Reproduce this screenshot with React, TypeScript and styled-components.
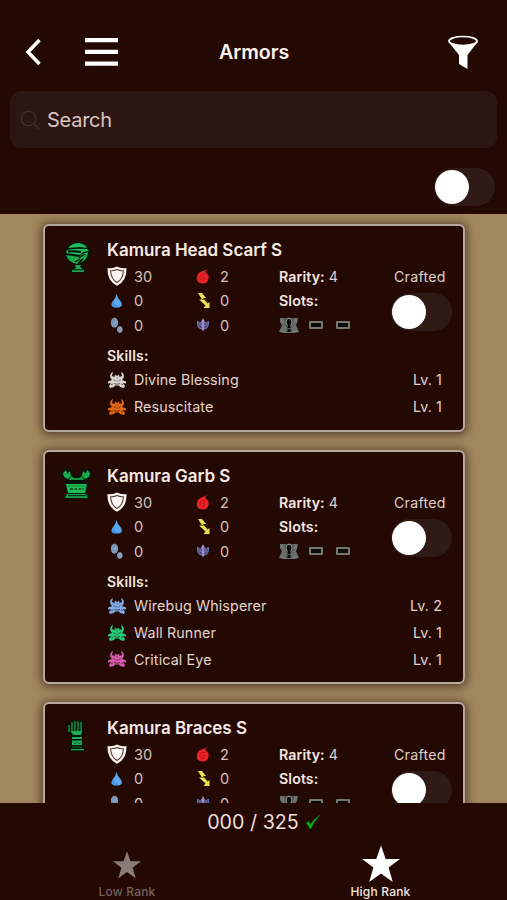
import React from "react";
import styled, { createGlobalStyle } from "styled-components";

const GlobalStyle = createGlobalStyle`
  * { box-sizing: border-box; }
  body { margin: 0; background: #230902; }
`;

const Screen = styled.div`
  width: 507px;
  height: 900px;
  display: flex;
  flex-direction: column;
  overflow: hidden;
  background: #230902;
  color: #f3e4e0;
  font-family: Inter, "Liberation Sans", sans-serif;
`;

const Header = styled.header`
  flex: 0 0 214px;
  padding: 24px 10px 0;
`;

const NavBar = styled.nav`
  height: 56px;
  display: grid;
  grid-template-columns: 61px 123px 1fr 55px;
  align-items: center;
  padding-left: 8px;
`;

const IconButton = styled.button`
  display: flex;
  padding: 0 6px;
  border: 0;
  background: none;
  color: #fff;
`;

const Title = styled.h1`
  margin: 0;
  padding-left: 17px;
  font-size: 19.6px;
  line-height: 24px;
  font-weight: 600;
  color: #fff2ef;
`;

const SearchBox = styled.div`
  height: 57px;
  margin-top: 11px;
  padding-left: 10px;
  display: flex;
  align-items: center;
  gap: 7px;
  border-radius: 11px;
  background: #2d1611;
  font-size: 20px;
  line-height: 26px;
  letter-spacing: -0.25px;
  color: #d8c6c2;
`;

const FilterRow = styled.div`
  display: flex;
  justify-content: flex-end;
  padding: 20px 2px 0 0;
`;

const Track = styled.div`
  width: 61px;
  height: 38px;
  padding: 2px 0 0 1px;
  border-radius: 19px;
  background: #301a16;
`;

const Knob = styled.div`
  width: 34px;
  height: 34px;
  border-radius: 50%;
  background: #fff;
`;

const List = styled.main`
  flex: 0 0 589px;
  overflow: hidden;
  display: flex;
  flex-direction: column;
  gap: 18px;
  padding: 10px 42px 0 43px;
  background: #a1865e;
`;

const Card = styled.article<{ $height: number }>`
  flex: 0 0 ${(p) => p.$height}px;
  display: grid;
  grid-template-columns: 62px 1fr;
  border: 2px solid #b7a79f;
  border-radius: 6px;
  background: #230902;
  box-shadow: 0 1px 9px 2px rgba(40, 22, 8, 0.6);
`;

const Emblem = styled.div`
  padding: 15px 0 0 17px;
`;

const Body = styled.div`
  padding-top: 12px;
`;

const Name = styled.h2`
  margin: 0;
  height: 26px;
  font-size: 17px;
  line-height: 24px;
  font-weight: 600;
  letter-spacing: -0.02px;
  white-space: nowrap;
  color: #f9e9e5;
`;

const Details = styled.div`
  height: 79px;
  display: grid;
  grid-template-columns: 86px 86px 108px 66px;
`;

const Stack = styled.div`
  display: grid;
  grid-template-rows: repeat(3, 24.5px);
`;

const Stat = styled.div`
  display: grid;
  grid-template-columns: 20px 1fr;
  gap: 7px;
  align-items: center;
  font-size: 14.5px;
  color: #d6c1bb;
`;

const StatRight = styled(Stat)`
  grid-template-columns: 16px 1fr;
  gap: 8px;
  padding-left: 3px;
`;

const Fact = styled.div`
  display: flex;
  align-items: center;
  gap: 4px;
  font-size: 14.2px;
  letter-spacing: 0.1px;
  color: #dfcfca;
`;

const Strong = styled.span`
  font-weight: 600;
  color: #f5e6e1;
`;

const SlotRow = styled(Fact)`
  gap: 13px;
`;

const JewelSlot = styled.span`
  display: flex;
  margin-right: -3px;
`;

const EmptySlot = styled.span`
  width: 14px;
  height: 8px;
  border: 2px solid #737671;
  border-radius: 1px;
  background: #090c0a;
`;

const Crafted = styled.div`
  padding: 1px 0 0 7px;
  font-size: 14.2px;
  line-height: 24px;
  letter-spacing: 0.25px;
  color: #dfcfca;
`;

const CraftedToggle = styled.div`
  padding: 4px 0 0 4px;
`;

const SkillsTitle = styled.h3`
  margin: 0;
  height: 24px;
  font-size: 14px;
  line-height: 25px;
  font-weight: 600;
  letter-spacing: 0.2px;
  color: #f5e6e1;
`;

const Skill = styled.div`
  height: 26.8px;
  display: grid;
  grid-template-columns: 20px 1fr auto;
  column-gap: 7px;
  align-items: center;
  padding: 0 21px 1px 0;
  font-size: 14.3px;
  letter-spacing: 0.12px;
  color: #e3d3cd;
`;

const Footer = styled.footer`
  flex: 1;
`;

const Progress = styled.div`
  height: 38px;
  display: flex;
  justify-content: center;
  align-items: center;
  gap: 7px;
  padding-left: 20px;
  font-size: 19.7px;
  color: #eedfda;
`;

const Tabs = styled.div`
  display: grid;
  grid-template-columns: 254px 253px;
`;

const Tab = styled.div<{ $active?: boolean }>`
  height: 59px;
  display: flex;
  flex-direction: column;
  align-items: center;
  justify-content: flex-end;
  gap: ${(p) => (p.$active ? 1 : 5)}px;
  padding-bottom: 1px;
  font-size: 12px;
  line-height: 15px;
  font-weight: 500;
  letter-spacing: 0.2px;
  color: ${(p) => (p.$active ? "#f5e6e1" : "#75625e")};

  svg {
    color: ${(p) => (p.$active ? "#fff" : "#8b7b78")};
  }
`;

function Toggle() {
  return (
    <Track>
      <Knob />
    </Track>
  );
}

function Scarf() {
  return (
    <svg width="30" height="33" viewBox="0 0 30 33">
      <path d="M3 10Q6 2 15 1Q25 1 28 9Q29 20 21 22L20 25L24 29V32H8V29L13 25L12 22Q4 20 3 13Z" fill="#02140a" />
      <path d="M6 7Q10 2 17 2Q23 3 25 7L18 6Z" fill="#20bd55" />
      <path d="M5 9Q14 7 25 8L27 10L21 11L18 14L4 12Z" fill="#20bd55" />
      <path d="M6 10.5Q13 10 19 11" fill="none" stroke="#02140a" strokeWidth="2" />
      <path d="M4 14L17 16L20 13L26 11Q26 18 19 22L22 17L18 19L15 23Q6 21 4 14Z" fill="#18a94b" />
      <path d="M17 17L23 13M13 21L18 18" stroke="#02140a" strokeWidth="1.2" />
      <path d="M13 24H19L18 26L22 29V31H10V29L14 27Z" fill="#20a44f" />
      <path d="M11 28.8H21" stroke="#02140a" />
    </svg>
  );
}

function Garb() {
  return (
    <svg width="30" height="33" viewBox="0 0 30 33">
      <path d="M0 4Q4 0 9 3L11 9H18L20 4Q24 0 29 3V10L24 13V16H26L24 26L27 28V32H2V28L5 26L3 16H6V13L0 10Z" fill="#02140a" />
      <path d="M1 6L4 3L5 7L8 4L9 9L6 12L2 10ZM28 6L25 3L24 7L21 4L20 9L23 12L27 10Z" fill="#18ad4b" />
      <path d="M9 9L12 11H17L20 9L22 13H7Z" fill="#139344" />
      <path d="M4 17H25L23 26H6Z" fill="#20bd55" />
      <path d="M6 19H24" stroke="#108337" />
      <path d="M8 22H11M12.5 22H15M16.5 22H19M20.5 22H22" stroke="#033916" strokeWidth="1.7" />
      <path d="M5 27H24L26 31H3Z" fill="#19a54a" />
      <path d="M6 28.7H24" stroke="#02140a" />
    </svg>
  );
}

function Brace() {
  return (
    <svg width="30" height="33" viewBox="0 0 30 33">
      <path d="M5 6L8 3L12 1H20L22 4V16L20 18L21 30L23 32H8V29L10 28V17L6 14Z" fill="#02140a" />
      <path d="M10 3V14M13 2V14M16 2V14M19 3V14M7 6V13" stroke="#10743a" strokeWidth="1.9" />
      <path d="M9 12H20L19 16H11ZM10 18H20V20H10ZM10 21.5H20V26H10ZM9 30H22V31.2H9Z" fill="#20ad51" />
      <path d="M11 23L13 25L15 23L17 25L19 23M10 28H20" fill="none" stroke="#076c31" />
    </svg>
  );
}

function Shield() {
  return (
    <svg width="20" height="20" viewBox="0 0 20 20">
      <path d="M10 .5Q14 3 19.5 2Q20 15 10 19.7Q0 15 .5 2Q6 3 10 .5Z" fill="#fff4f0" />
      <path d="M10 3.6Q13 5 16.4 4.7Q16 13 10 16.5Q4 13 3.6 4.7Q7 5 10 3.6Z" fill="#fff8f5" stroke="#573f39" strokeWidth="1.1" />
    </svg>
  );
}

function Flame() {
  return (
    <svg width="14" height="16" viewBox="0 0 14 16">
      <path d="M12 .5Q8.5 3 10 5Q13 6 12.7 10Q12 15.5 6.5 15.5Q0 15 .8 9Q2 4 7 3Q9 2 12 .5Z" fill="#eb2226" />
      <path d="M9.5 6.5Q4 6 4 9.5Q4.5 13 8 12Q9.5 11 8.5 9.2H6.5" fill="none" stroke="#a91419" strokeWidth=".8" />
    </svg>
  );
}

function Drop() {
  return (
    <svg width="20" height="14" viewBox="0 0 20 14">
      <path d="M9.5 0Q10.3 4 13.5 7Q17 12 12 13.6H7.5Q2 12 6 7Q9 3.5 9.5 0Z" fill="#5ca7f2" />
      <path d="M6 8Q4 12 8 12.7H12L9 11Q7 10 7.5 7Z" fill="#4494ec" />
    </svg>
  );
}

function Bolt() {
  return (
    <svg width="16" height="17" viewBox="0 0 16 17">
      <path d="M2 1H6L10 6H7L11.5 11.5L13.5 10V16H7.5L9.5 13.5L3 7.5H6Z" fill="#e9e24e" />
      <path d="M6 7.5H9L12 11" fill="none" stroke="#544212" strokeWidth=".7" />
    </svg>
  );
}

function Ice() {
  return (
    <svg width="20" height="17" viewBox="0 0 20 17" fill="#7796bb" stroke="#a4b5ce" strokeWidth=".7">
      <ellipse cx="7.5" cy="5.7" rx="3.1" ry="4.5" />
      <ellipse cx="12.8" cy="12.5" rx="2.4" ry="2.9" />
      <path d="M6 5L8 7L9 4M12 12L14 13" fill="none" />
    </svg>
  );
}

function Dragon() {
  return (
    <svg width="14" height="16" viewBox="0 0 14 16">
      <path d="M2 4Q1 9 4 11L7 12L10 11Q13 9 12 4M4 5V8L7 10L10 8V5" fill="none" stroke="#6970b1" strokeWidth="1.7" />
      <path d="M7 1L8.8 4.5L8 12L7 15L6 12L5.2 4.5Z" fill="#9a8fc4" />
    </svg>
  );
}

function Jewel() {
  return (
    <svg width="20" height="17" viewBox="0 0 20 17">
      <path d="M1 1H19L18 6L17 8L20 15L15 16H5L0 15L3 8L1 5Z" fill="#676d69" />
      <path d="M5 2Q10 -1 15 2L14 7L12 10L13 15H7L8 10L6 7Z" fill="#4c504e" />
      <ellipse cx="10" cy="5" rx="3" ry="3.7" fill="#080b0a" stroke="#a0a7a1" strokeWidth=".9" />
      <path d="M10 6V11" stroke="#060907" strokeWidth="2.5" />
      <circle cx="10" cy="13.5" r="1.5" fill="#060907" />
      <path d="M2 3L5 5M18 3L15 5M2 14L6 15M18 14L14 15" stroke="#858d87" strokeWidth=".8" />
    </svg>
  );
}

function SkillIcon({ color }: { color: string }) {
  return (
    <svg width="20" height="18" viewBox="0 0 20 18">
      <path d="M6 .8Q2 3 3.5 7L5 9L1 10.5V12.5L4 12L2 15L3 17L7 16L8 14.5H12L13 16L17 17L18 15L16 12L19 12.5V10.5L15 9L16.5 7Q18 3 14 .8L15 5L12.5 6L12 3.5L10 5L8 3.5L7.5 6L5 5Z" fill={color} />
      <path d="M6.5 8.5L8.5 10M13.5 8.5L11.5 10M7 12.5Q10 14 13 12.5M4 13.5L6 13M16 13.5L14 13" fill="none" stroke="#230902" strokeWidth=".9" opacity=".65" />
      <path d="M9 7H11M10 9V11" stroke="#230902" strokeWidth=".7" opacity=".45" />
    </svg>
  );
}

function Star({ size }: { size: number }) {
  return (
    <svg width={size} height={size} viewBox="0 0 38 38" fill="currentColor">
      <path d="M19 .5L23.7 14H38L26.6 22.6L30.8 37L19 28.5L7.2 37L11.4 22.6L0 14H14.3Z" />
    </svg>
  );
}

type Armor = {
  name: string;
  height: number;
  icon: React.ReactNode;
  skills: { name: string; level: number; color: string }[];
};

const armors: Armor[] = [
  {
    name: "Kamura Head Scarf S",
    height: 208,
    icon: <Scarf />,
    skills: [
      { name: "Divine Blessing", level: 1, color: "#d5d6d4" },
      { name: "Resuscitate", level: 1, color: "#e46512" },
    ],
  },
  {
    name: "Kamura Garb S",
    height: 234,
    icon: <Garb />,
    skills: [
      { name: "Wirebug Whisperer", level: 2, color: "#81aae5" },
      { name: "Wall Runner", level: 1, color: "#25ca79" },
      { name: "Critical Eye", level: 1, color: "#d45bab" },
    ],
  },
  { name: "Kamura Braces S", height: 234, icon: <Brace />, skills: [] },
];

function ArmorCard({ armor }: { armor: Armor }) {
  return (
    <Card $height={armor.height}>
      <Emblem>{armor.icon}</Emblem>
      <Body>
        <Name>{armor.name}</Name>
        <Details>
          <Stack>
            <Stat><Shield />30</Stat>
            <Stat><Drop />0</Stat>
            <Stat><Ice />0</Stat>
          </Stack>
          <Stack>
            <StatRight><Flame />2</StatRight>
            <StatRight><Bolt />0</StatRight>
            <StatRight><Dragon />0</StatRight>
          </Stack>
          <Stack>
            <Fact><Strong>Rarity:</Strong>4</Fact>
            <Fact><Strong>Slots:</Strong></Fact>
            <SlotRow>
              <JewelSlot><Jewel /></JewelSlot>
              <EmptySlot />
              <EmptySlot />
            </SlotRow>
          </Stack>
          <div>
            <Crafted>Crafted</Crafted>
            <CraftedToggle><Toggle /></CraftedToggle>
          </div>
        </Details>
        {armor.skills.length > 0 && <SkillsTitle>Skills:</SkillsTitle>}
        {armor.skills.map((skill) => (
          <Skill key={skill.name}>
            <SkillIcon color={skill.color} />
            <span>{skill.name}</span>
            <span>Lv. {skill.level}</span>
          </Skill>
        ))}
      </Body>
    </Card>
  );
}

export default function App() {
  return (
    <Screen>
      <GlobalStyle />
      <Header>
        <NavBar>
          <IconButton aria-label="Back">
            <svg width="20" height="28" viewBox="0 0 20 28" fill="none" stroke="currentColor" strokeWidth="3.5">
              <path d="M15.5 2L4 14L15.5 26" />
            </svg>
          </IconButton>
          <IconButton aria-label="Menu">
            <svg width="34" height="30" viewBox="0 0 34 30" fill="currentColor">
              <path d="M0 1H33V5.2H0ZM0 12.8H33V17H0ZM0 24.5H33V28.7H0Z" />
            </svg>
          </IconButton>
          <Title>Armors</Title>
          <IconButton aria-label="Filter">
            <svg width="31" height="35" viewBox="0 0 31 35">
              <path d="M.3 6.5L11 20V29L19.5 34V20L30 6.5Z" fill="#fff" />
              <ellipse cx="15" cy="6" rx="14" ry="4.5" fill="#230902" stroke="#fff" strokeWidth="1.7" />
            </svg>
          </IconButton>
        </NavBar>
        <SearchBox>
          <svg width="20" height="20" viewBox="0 0 20 20" fill="none" stroke="#462e29" strokeWidth="1.3">
            <circle cx="8.5" cy="8.5" r="7.2" />
            <path d="M14 14L19 19" />
          </svg>
          Search
        </SearchBox>
        <FilterRow><Toggle /></FilterRow>
      </Header>
      <List>
        {armors.map((armor) => <ArmorCard key={armor.name} armor={armor} />)}
      </List>
      <Footer>
        <Progress>
          <span>000 / 325</span>
          <svg width="14" height="14" viewBox="0 0 14 14">
            <path d="M.5 8L2.5 6.5L4.5 9.5Q8 4 13.5 .5Q8 6 5 13.5H4Z" fill="#08a91a" stroke="#08a91a" strokeWidth=".5" />
          </svg>
        </Progress>
        <Tabs>
          <Tab><Star size={28} />Low Rank</Tab>
          <Tab $active><Star size={38} />High Rank</Tab>
        </Tabs>
      </Footer>
    </Screen>
  );
}
